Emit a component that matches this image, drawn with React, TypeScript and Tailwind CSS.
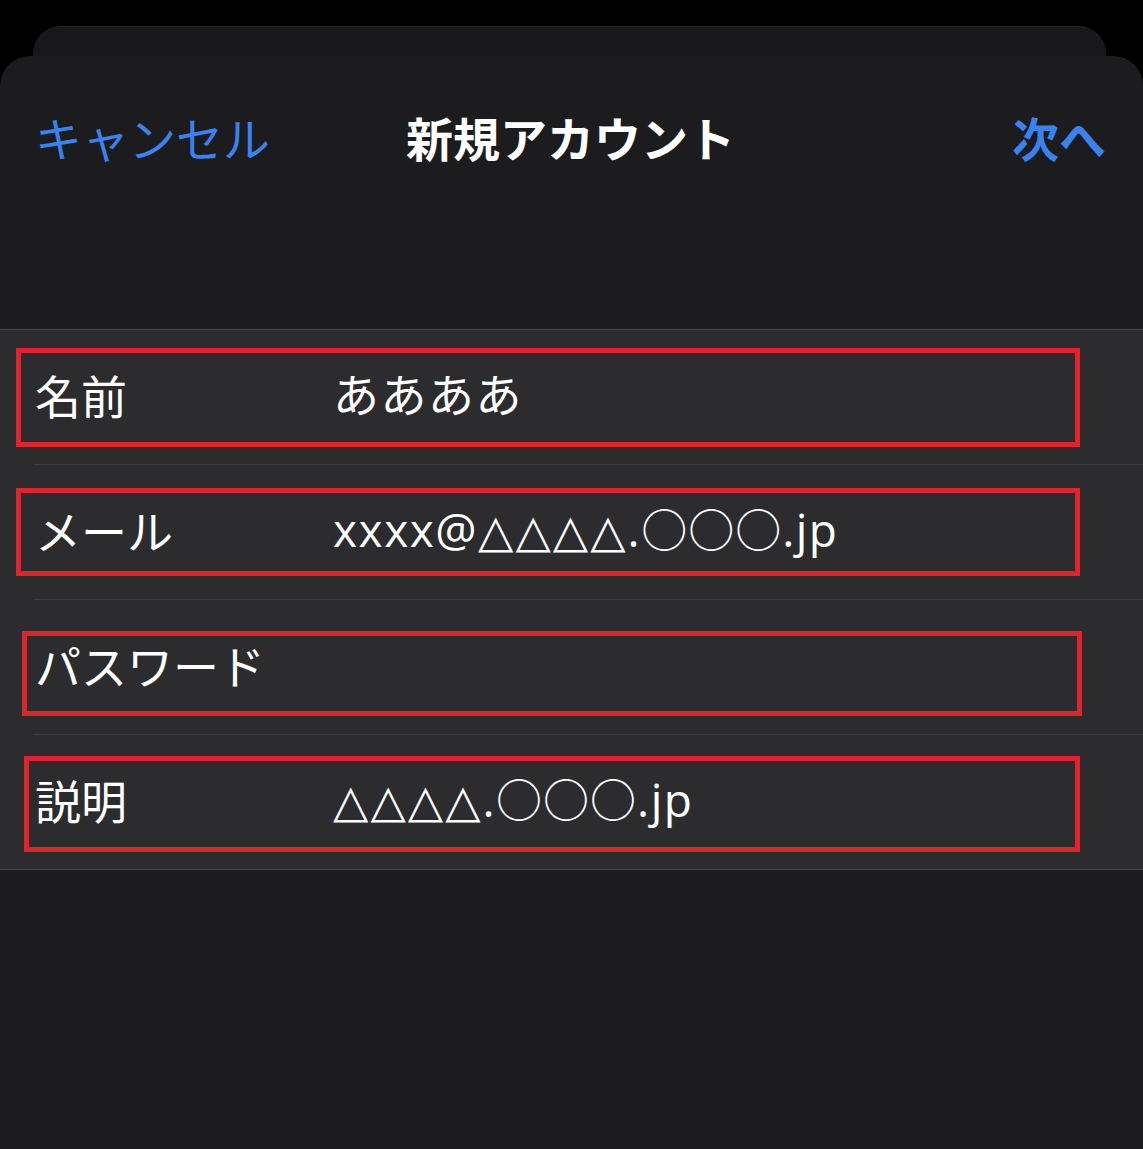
const jp = 'font-["Noto_Sans_CJK_JP","Noto_Sans",sans-serif]'

type Field = {
  label: string
  value?: React.ReactNode
  box: string
}

const triangles = <span className='font-["DejaVu_Sans",sans-serif] tracking-[2px]'>△△△△</span>
const circles = <span className='font-["Noto_Sans_CJK_JP",sans-serif] tracking-[1px]'>○○○</span>

const fields: Field[] = [
  { label: '名前', value: 'ああああ', box: 'top-[18px] left-[16px] w-[1064px] h-[99px]' },
  {
    label: 'メール',
    value: (
      <>
        xxxx@{triangles}.{circles}.jp
      </>
    ),
    box: 'top-[23px] left-[16px] w-[1064px] h-[88px]',
  },
  { label: 'パスワード', box: 'top-[31px] left-[22px] w-[1060px] h-[85px]' },
  {
    label: '説明',
    value: (
      <>
        {triangles}.{circles}.jp
      </>
    ),
    box: 'top-[21px] left-[24px] w-[1056px] h-[96px]',
  },
]

export default function App() {
  return (
    <div className="min-h-[1149px] bg-black pt-[26px]">
      <div className="ml-[33px] mr-[37px] h-[30px] rounded-t-[28px] border-t border-[#232325] bg-[#18181a]" />
      <div className="min-h-[1093px] rounded-t-[30px] bg-[#1c1c1e]">
        <header className={`grid h-[160px] grid-cols-[1fr_auto_1fr] items-center pl-[35px] pr-[37px] ${jp}`}>
          <button className="justify-self-start text-[47px] leading-none text-[#3a82f0]">キャンセル</button>
          <h1 className="text-[47px] font-bold leading-none text-white">新規アカウント</h1>
          <button className="justify-self-end text-[47px] font-semibold leading-none text-[#3a82f0]">次へ</button>
        </header>
        <div className="h-[113px]" />
        <ul className="border-y border-[#444446] bg-[#2c2c2e]">
          {fields.map((field, i) => (
            <li key={field.label}>
              {i > 0 && <div className="ml-[33px] h-px bg-[#3d3d40]" />}
              <div className="relative flex h-[134px] items-center pb-[7px] pl-[35px] text-[46px] leading-none text-white">
                <span className={`w-[298px] ${jp}`}>{field.label}</span>
                {field.value && (
                  <span className='font-["Open_Sans","DejaVu_Sans","Noto_Sans_CJK_JP",sans-serif] tracking-[1.5px]'>
                    {field.value}
                  </span>
                )}
                <div className={`pointer-events-none absolute border-[5px] border-[#e0242e] ${field.box}`} />
              </div>
            </li>
          ))}
        </ul>
      </div>
    </div>
  )
}
